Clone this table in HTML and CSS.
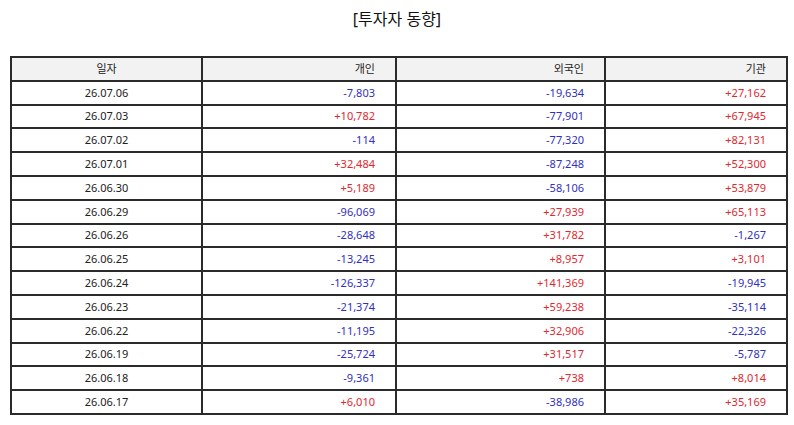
FILE: index.html
```html
<!DOCTYPE html>
<html lang="ko">
<head>
<meta charset="utf-8">
<title>투자자 동향</title>
<link rel="stylesheet" href="styles.css">
</head>
<body>
<div class="page">
  <h1 class="title">[투자자 동향]</h1>
  <table class="flow">
    <colgroup>
      <col class="c-date"><col class="c-ind"><col class="c-for"><col class="c-inst">
    </colgroup>
    <thead>
      <tr><th class="date">일자</th><th>개인</th><th>외국인</th><th>기관</th></tr>
    </thead>
    <tbody>
      <tr><td class="date">26.07.06</td><td class="dn">-7,803</td><td class="dn">-19,634</td><td class="up">+27,162</td></tr>
      <tr><td class="date">26.07.03</td><td class="up">+10,782</td><td class="dn">-77,901</td><td class="up">+67,945</td></tr>
      <tr><td class="date">26.07.02</td><td class="dn">-114</td><td class="dn">-77,320</td><td class="up">+82,131</td></tr>
      <tr><td class="date">26.07.01</td><td class="up">+32,484</td><td class="dn">-87,248</td><td class="up">+52,300</td></tr>
      <tr><td class="date">26.06.30</td><td class="up">+5,189</td><td class="dn">-58,106</td><td class="up">+53,879</td></tr>
      <tr><td class="date">26.06.29</td><td class="dn">-96,069</td><td class="up">+27,939</td><td class="up">+65,113</td></tr>
      <tr><td class="date">26.06.26</td><td class="dn">-28,648</td><td class="up">+31,782</td><td class="dn">-1,267</td></tr>
      <tr><td class="date">26.06.25</td><td class="dn">-13,245</td><td class="up">+8,957</td><td class="up">+3,101</td></tr>
      <tr><td class="date">26.06.24</td><td class="dn">-126,337</td><td class="up">+141,369</td><td class="dn">-19,945</td></tr>
      <tr><td class="date">26.06.23</td><td class="dn">-21,374</td><td class="up">+59,238</td><td class="dn">-35,114</td></tr>
      <tr><td class="date">26.06.22</td><td class="dn">-11,195</td><td class="up">+32,906</td><td class="dn">-22,326</td></tr>
      <tr><td class="date">26.06.19</td><td class="dn">-25,724</td><td class="up">+31,517</td><td class="dn">-5,787</td></tr>
      <tr><td class="date">26.06.18</td><td class="dn">-9,361</td><td class="up">+738</td><td class="up">+8,014</td></tr>
      <tr><td class="date">26.06.17</td><td class="up">+6,010</td><td class="dn">-38,986</td><td class="up">+35,169</td></tr>
    </tbody>
  </table>
</div>
</body>
</html>
```
FILE: styles.css
```css
html, body {
  margin: 0;
  padding: 0;
  background: #ffffff;
}

.page {
  width: 794px;
  height: 425px;
  font-family: "Noto Sans", "Noto Sans CJK KR", sans-serif;
  color: #222222;
}

.title {
  margin: 0;
  padding-top: 7px;
  height: 49px;
  line-height: 24px;
  font-size: 16px;
  font-weight: 400;
  text-align: center;
  color: #111111;
}

.flow {
  margin-left: 10px;
  width: 776px;
  border-collapse: collapse;
  table-layout: fixed;
  font-size: 11px;
}

.c-date { width: 191px; }
.c-ind { width: 194px; }
.c-for { width: 209px; }
.c-inst { width: 182px; }

.flow th,
.flow td {
  border: 2px solid #2a2a2a;
  height: 21.8px;
  padding: 0 20px 0 4px;
  text-align: right;
  vertical-align: middle;
  line-height: 14px;
  font-weight: 400;
  white-space: nowrap;
}

.flow th {
  background: #f2f2f2;
  color: #222222;
}

.flow .date {
  text-align: center;
  padding: 0;
}

.up { color: #e0282e; }
.dn { color: #3030c0; }
```
